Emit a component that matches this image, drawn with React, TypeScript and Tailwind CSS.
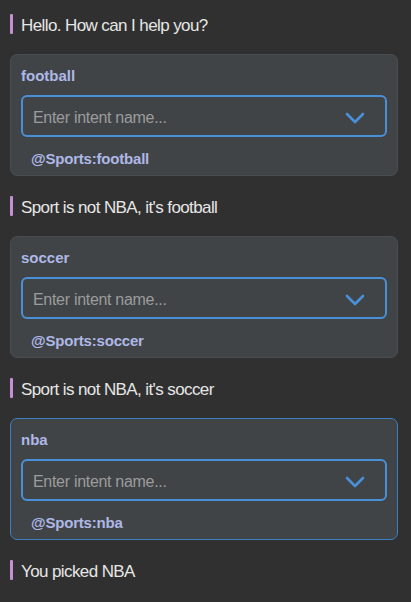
import React from "react";

const font = { fontFamily: '"Liberation Sans", Arial, sans-serif' };

function Message({ text }: { text: string }) {
  return (
    <div className="flex items-center gap-2 h-5 pl-[10px]">
      <div className="w-[3px] h-5 bg-[#c48fd3] rounded-[1px]" />
      <span className="mt-[3px] text-[17px] text-[#e6e6e6] leading-5 tracking-[-0.6px]">{text}</span>
    </div>
  );
}

function Chevron() {
  return (
    <svg width="20" height="12" viewBox="0 0 20 12" fill="none">
      <path d="M2 2 L10 10 L18 2" stroke="#4a90d9" strokeWidth="2.6" strokeLinecap="round" strokeLinejoin="round" />
    </svg>
  );
}

function Card({ name, active }: { name: string; active?: boolean }) {
  return (
    <div
      className={`ml-[10px] w-[388px] h-[122px] rounded-[7px] border bg-[#414446] pt-[10px] px-[10px] flex flex-col ${
        active ? "border-[#3d7fc0]" : "border-[#4a4d50]"
      }`}
    >
      <div className="h-5 leading-5 mt-[1px] text-[15px] font-bold text-[#aeb8e6]">{name}</div>
      <div className="mt-[9px] h-[42px] rounded-[6px] border-2 border-[#4a90d9] flex items-center pt-[3px] pl-[10px] pr-[20px]">
        <span className="flex-1 text-[16px] text-[#9b9c9d] tracking-[-0.3px]">Enter intent name...</span>
        <Chevron />
      </div>
      <div className="mt-[11px] pl-[10px] h-5 leading-5 mt-[12px] text-[15px] font-bold text-[#aeb8e6] tracking-[-0.2px]">@Sports:{name}</div>
    </div>
  );
}

export default function App() {
  return (
    <div style={font} className="w-[411px] h-[602px] bg-[#303030] pt-[14px] flex flex-col gap-5 overflow-hidden">
      <Message text="Hello. How can I help you?" />
      <Card name="football" />
      <Message text="Sport is not NBA, it's football" />
      <Card name="soccer" />
      <Message text="Sport is not NBA, it's soccer" />
      <Card name="nba" active />
      <Message text="You picked NBA" />
    </div>
  );
}
